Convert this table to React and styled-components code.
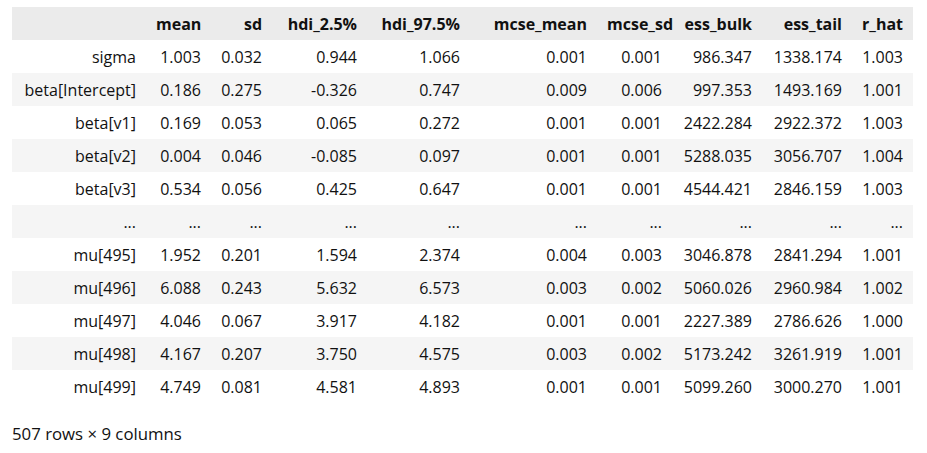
import React from "react";
import styled, { createGlobalStyle } from "styled-components";

const GlobalStyle = createGlobalStyle`
  body {
    margin: 0;
    background: #ffffff;
    font-family: "Open Sans", "Noto Sans", sans-serif;
    color: #111111;
  }
`;

const Page = styled.div`
  padding: 7px 0 0 12px;
`;

const Table = styled.table`
  border-collapse: collapse;
  border-spacing: 0;
  table-layout: fixed;
  width: 901px;
  font-size: 16px;
`;

const HeadRow = styled.tr`
  background: #ebebeb;
`;

const Row = styled.tr`
  background: ${(p) => (p.$striped ? "#f5f5f5" : "#ffffff")};
`;

const Th = styled.th`
  height: 33px;
  padding: 0 10px;
  text-align: right;
  font-weight: 700;
  white-space: nowrap;
`;

const Td = styled.td`
  height: 33px;
  padding: 0 10px;
  text-align: right;
  font-weight: 400;
  white-space: nowrap;
`;

const Footer = styled.p`
  margin: 19px 0 0;
  font-size: 16.8px;
`;

const columns = [
  "mean",
  "sd",
  "hdi_2.5%",
  "hdi_97.5%",
  "mcse_mean",
  "mcse_sd",
  "ess_bulk",
  "ess_tail",
  "r_hat",
];

const widths = [134, 65, 61, 95, 103, 127, 75, 90, 90, 61];

const rows = [
  ["sigma", "1.003", "0.032", "0.944", "1.066", "0.001", "0.001", "986.347", "1338.174", "1.003"],
  ["beta[Intercept]", "0.186", "0.275", "-0.326", "0.747", "0.009", "0.006", "997.353", "1493.169", "1.001"],
  ["beta[v1]", "0.169", "0.053", "0.065", "0.272", "0.001", "0.001", "2422.284", "2922.372", "1.003"],
  ["beta[v2]", "0.004", "0.046", "-0.085", "0.097", "0.001", "0.001", "5288.035", "3056.707", "1.004"],
  ["beta[v3]", "0.534", "0.056", "0.425", "0.647", "0.001", "0.001", "4544.421", "2846.159", "1.003"],
  ["...", "...", "...", "...", "...", "...", "...", "...", "...", "..."],
  ["mu[495]", "1.952", "0.201", "1.594", "2.374", "0.004", "0.003", "3046.878", "2841.294", "1.001"],
  ["mu[496]", "6.088", "0.243", "5.632", "6.573", "0.003", "0.002", "5060.026", "2960.984", "1.002"],
  ["mu[497]", "4.046", "0.067", "3.917", "4.182", "0.001", "0.001", "2227.389", "2786.626", "1.000"],
  ["mu[498]", "4.167", "0.207", "3.750", "4.575", "0.003", "0.002", "5173.242", "3261.919", "1.001"],
  ["mu[499]", "4.749", "0.081", "4.581", "4.893", "0.001", "0.001", "5099.260", "3000.270", "1.001"],
];

export default function App() {
  return (
    <Page>
      <GlobalStyle />
      <Table>
        <colgroup>
          {widths.map((w, i) => (
            <col key={i} style={{ width: w }} />
          ))}
        </colgroup>
        <thead>
          <HeadRow>
            <Th />
            {columns.map((c) => (
              <Th key={c}>{c}</Th>
            ))}
          </HeadRow>
        </thead>
        <tbody>
          {rows.map((r, i) => (
            <Row key={i} $striped={i % 2 === 1}>
              {r.map((v, j) => (
                <Td key={j}>{v}</Td>
              ))}
            </Row>
          ))}
        </tbody>
      </Table>
      <Footer>507 rows × 9 columns</Footer>
    </Page>
  );
}
